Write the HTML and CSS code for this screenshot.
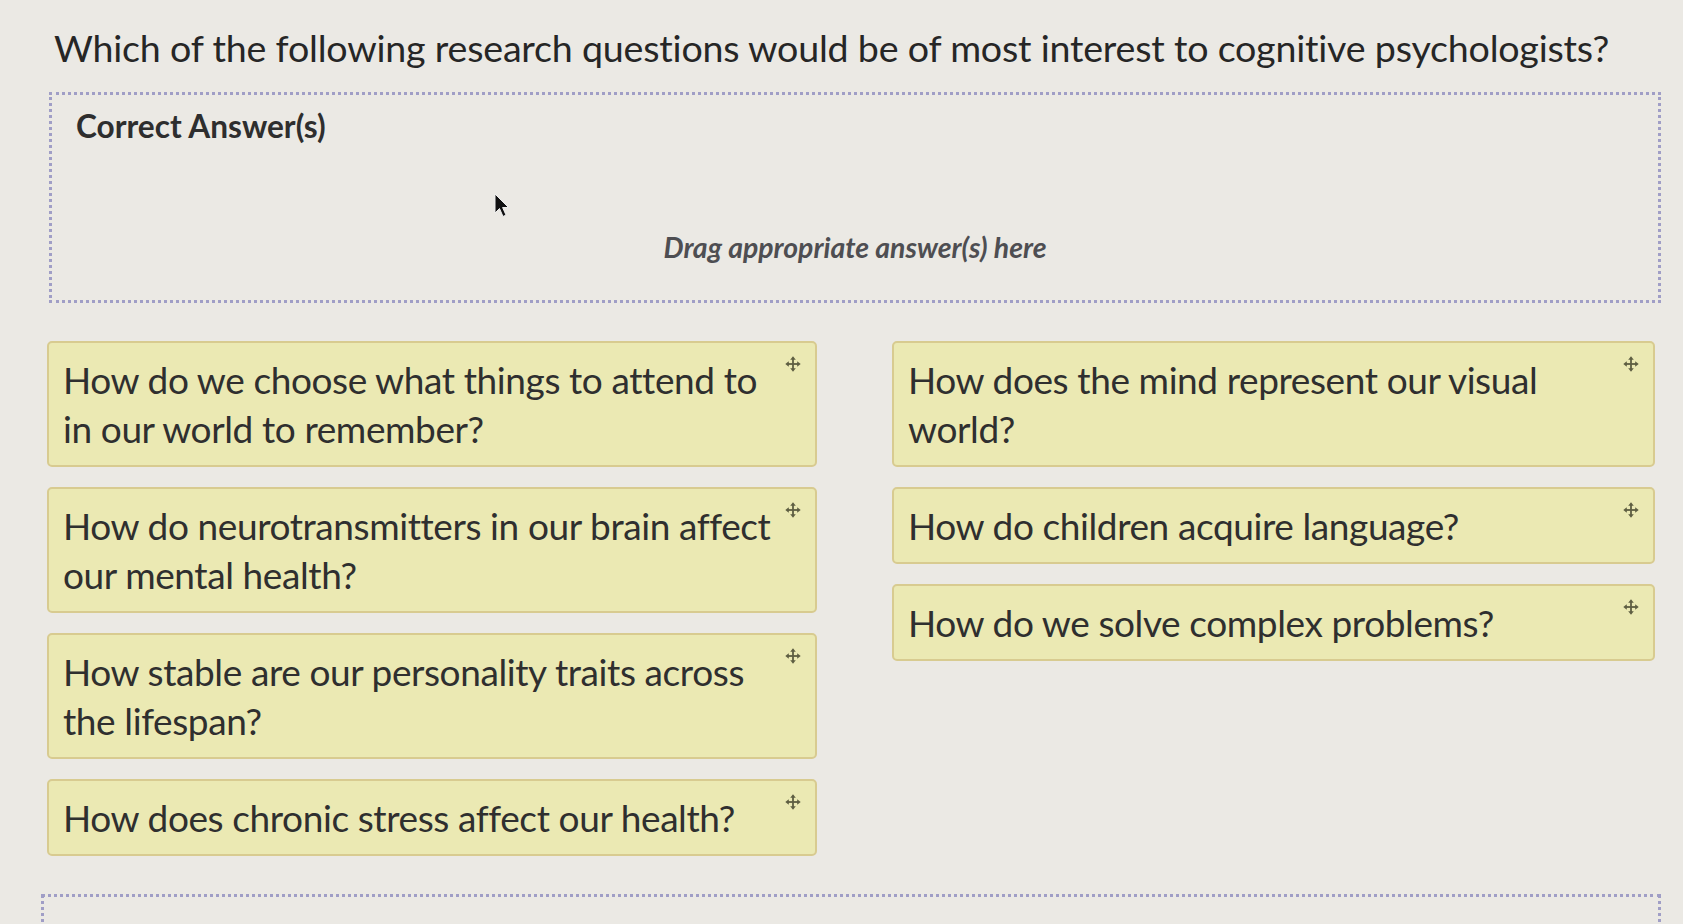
FILE: index.html
```html
<!DOCTYPE html>
<html lang="en">
<head>
<meta charset="utf-8">
<title>Question</title>
<link rel="stylesheet" href="styles.css">
</head>
<body>
<main class="page">
  <h1 class="question">Which of the following research questions would be of most interest to cognitive psychologists?</h1>

  <section class="dropzone">
    <h2 class="dropzone-title">Correct Answer(s)</h2>
    <p class="dropzone-hint">Drag appropriate answer(s) here</p>
    <svg class="cursor" width="18" height="26" viewBox="0 0 18 26" aria-hidden="true">
      <path d="M1 1 L1 20 L5.5 15.5 L9 23.5 L12 22 L8.6 14.5 L14.5 14.5 Z" fill="#111" stroke="#eee" stroke-width="1"/>
    </svg>
  </section>

  <div class="choices">
    <div class="column column-left">
      <div class="card"><span>How do we choose what things to attend to<br>in our world to remember?</span><svg class="move" viewBox="0 0 16 16"><use href="#mv"/></svg></div>
      <div class="card"><span>How do neurotransmitters in our brain affect<br>our mental health?</span><svg class="move" viewBox="0 0 16 16"><use href="#mv"/></svg></div>
      <div class="card"><span>How stable are our personality traits across<br>the lifespan?</span><svg class="move" viewBox="0 0 16 16"><use href="#mv"/></svg></div>
      <div class="card"><span>How does chronic stress affect our health?</span><svg class="move" viewBox="0 0 16 16"><use href="#mv"/></svg></div>
    </div>
    <div class="column column-right">
      <div class="card"><span>How does the mind represent our visual<br>world?</span><svg class="move" viewBox="0 0 16 16"><use href="#mv"/></svg></div>
      <div class="card"><span>How do children acquire language?</span><svg class="move" viewBox="0 0 16 16"><use href="#mv"/></svg></div>
      <div class="card"><span>How do we solve complex problems?</span><svg class="move" viewBox="0 0 16 16"><use href="#mv"/></svg></div>
    </div>
  </div>

  <section class="dropzone dropzone-second"></section>
</main>

<svg width="0" height="0" style="position:absolute">
  <defs>
    <g id="mv" fill="#5e5e42" stroke="#5e5e42">
      <line x1="8" y1="2.5" x2="8" y2="13.5" stroke-width="1.8"/>
      <line x1="2.5" y1="8" x2="13.5" y2="8" stroke-width="1.8"/>
      <path d="M8 0.3 L10.8 3.8 L5.2 3.8 Z" stroke="none"/>
      <path d="M8 15.7 L10.8 12.2 L5.2 12.2 Z" stroke="none"/>
      <path d="M0.3 8 L3.8 5.2 L3.8 10.8 Z" stroke="none"/>
      <path d="M15.7 8 L12.2 5.2 L12.2 10.8 Z" stroke="none"/>
    </g>
  </defs>
</svg>
</body>
</html>
```

FILE: styles.css
```css
* { box-sizing: border-box; }

html, body {
  margin: 0;
  padding: 0;
  background: #ebe9e4;
  height: 100%;
  overflow: hidden;
}

body {
  font-family: Lato, "Open Sans", "Noto Sans", sans-serif;
  color: #2b2b2b;
}

.page {
  padding: 24px 22px 0 49px;
}

.question {
  margin: 0 0 0 5px;
  font-size: 37.6px;
  font-weight: 400;
  line-height: 48px;
  color: #262626;
  letter-spacing: -0.2px;
  white-space: nowrap;
}

.dropzone {
  position: relative;
  margin-top: 20px;
  height: 211px;
  border: 3px dotted #a09ec6;
  padding: 13px 24px;
}

.dropzone-title {
  margin: 0;
  font-size: 31.6px;
  font-weight: 700;
  color: #2e2e2e;
  line-height: 36px;
}

.dropzone-hint {
  margin: 86px 0 0;
  text-align: center;
  font-size: 28.4px;
  font-weight: 700;
  font-style: italic;
  color: #4e4e52;
  line-height: 34px;
}

.cursor {
  position: absolute;
  left: 442px;
  top: 98px;
}

.choices {
  display: flex;
  gap: 75px;
  margin-top: 38px;
  margin-left: -2px;
}

.column {
  display: flex;
  flex-direction: column;
  gap: 20px;
}

.column-left { width: 770px; }
.column-right { width: 763px; }

.card {
  position: relative;
  background: #ebe9b3;
  border: 2px solid #d8cb90;
  border-radius: 5px;
  padding: 12px 30px 12px 14px;
  font-size: 37px;
  line-height: 49px;
  color: #2f2f2f;
  letter-spacing: -0.4px;
  white-space: nowrap;
}

.move {
  position: absolute;
  top: 13px;
  right: 14px;
  width: 16px;
  height: 16px;
}

.dropzone-second {
  margin-top: 38px;
  margin-left: -8px;
  height: 120px;
}
```
